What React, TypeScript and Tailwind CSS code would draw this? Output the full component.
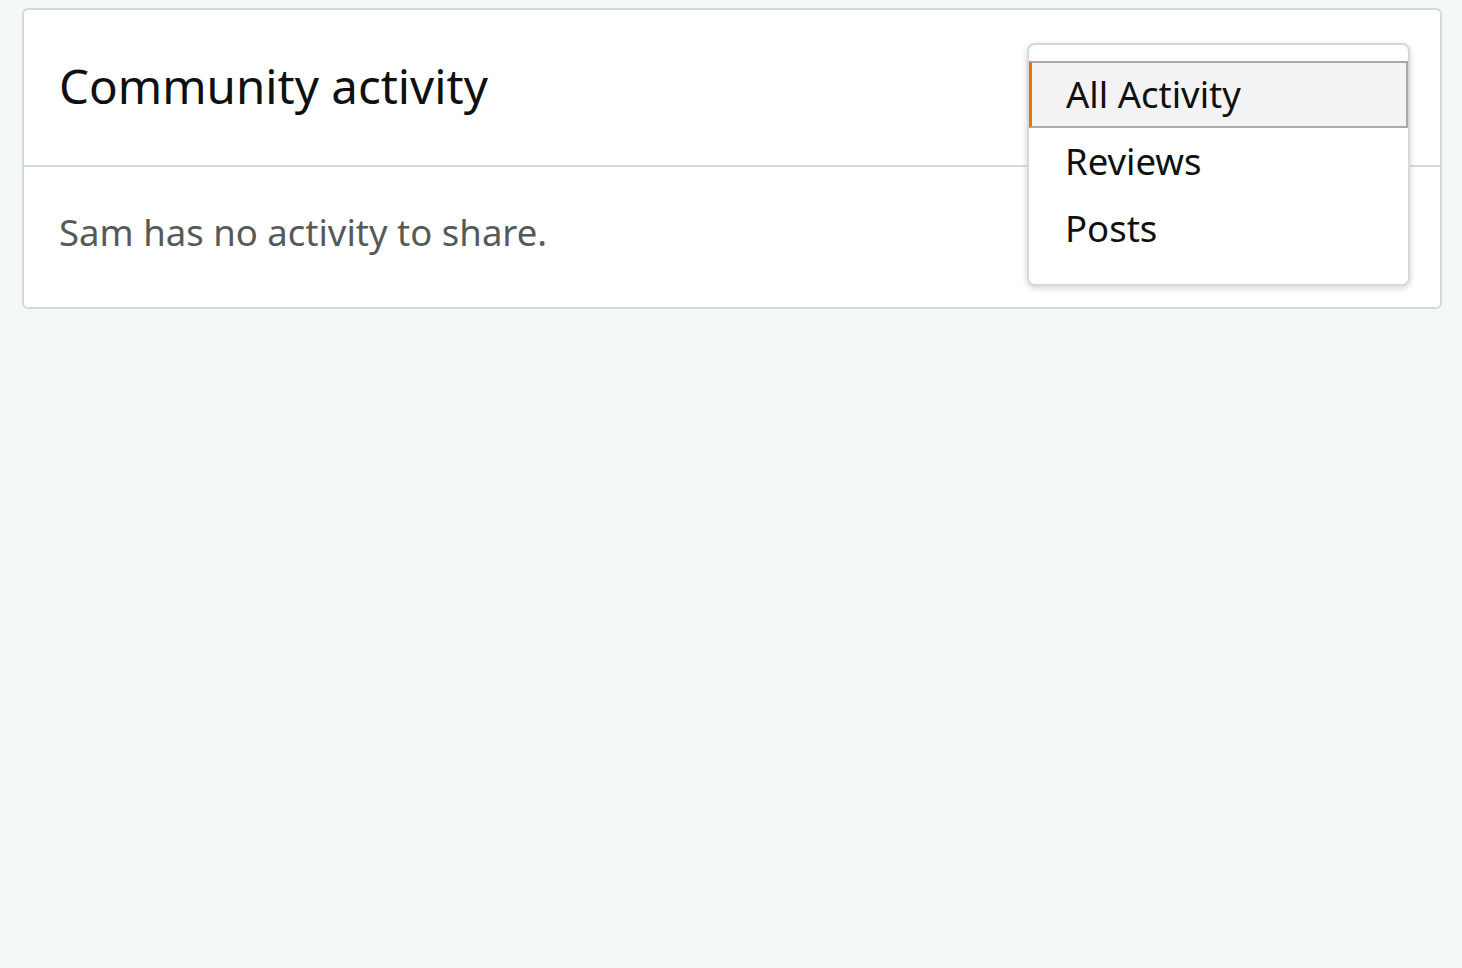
export default function App() {
  const items = ['All Activity', 'Reviews', 'Posts']
  return (
    <div className="min-h-screen bg-[#f4f8f8] pl-[22px] pr-[20px] pt-[8px] font-['Noto_Sans',sans-serif]" style={{ width: 1462, height: 968 }}>
      <div className="relative rounded-[6px] border-2 border-[#d5d9d9] bg-white">
        <div className="flex h-[157px] items-center border-b-2 border-[#d5d9d9] px-[35px] pb-[4px]">
          <h2 className="text-[47.5px] font-normal leading-none text-[#0f1111]">Community activity</h2>
        </div>
        <div className="flex h-[140px] items-center px-[35px] pb-[10px]">
          <p className="text-[36.5px] leading-none text-[#565959]">Sam has no activity to share.</p>
        </div>

        <div className="absolute left-[1003px] top-[33px] w-[383px] rounded-[8px] border-2 border-[#d5d9d9] bg-white pt-[16px] pb-[22px] shadow-[0_2px_6px_rgba(15,17,17,0.18)]">
          {items.map((label, i) => (
            <div
              key={label}
              className={`flex h-[67px] items-center pl-[34px] text-[36.5px] leading-none text-[#0f1111] ${
                i === 0 ? 'border-2 border-l-[3px] border-[#a9a9a9] border-l-[#e77600] bg-[#f3f3f3]' : 'border-2 border-transparent'
              }`}
            >
              {label}
            </div>
          ))}
        </div>
      </div>
    </div>
  )
}
